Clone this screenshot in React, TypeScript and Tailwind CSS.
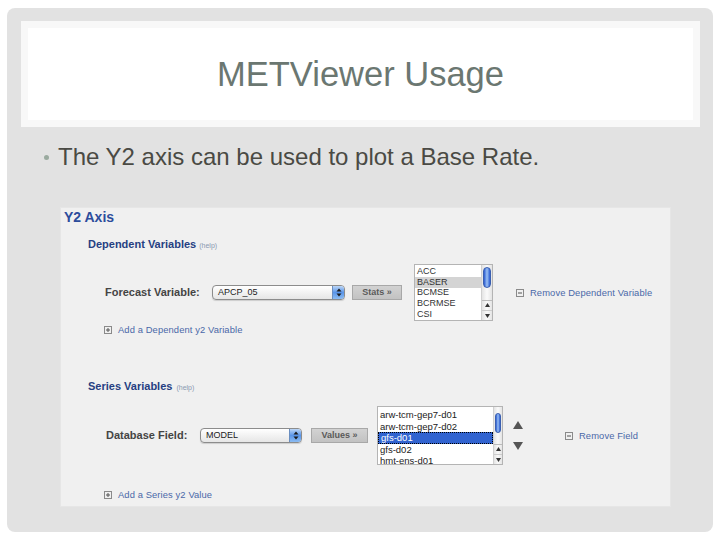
import React from "react";

const F = { fontFamily: '"Liberation Sans", Arial, sans-serif' };

function SelectBox({ w, text }: { w: string; text: string }) {
  return (
    <div className={`${w} h-[15px] flex items-stretch rounded-[4px] border border-[#8c8c8c] bg-gradient-to-b from-white to-[#e6e6e6] shadow-[0_1px_1px_rgba(0,0,0,0.15)] overflow-hidden`}>
      <div className="flex-1 flex items-center pl-[5px] text-[9px] text-[#222] leading-none">{text}</div>
      <div className="w-[12px] flex items-center justify-center bg-gradient-to-b from-[#bcd6f6] via-[#5a95e8] to-[#8cbcf2] border-l border-[#6a8ec0]">
        <svg width="6" height="9" viewBox="0 0 6 9">
          <path d="M3 0.5 L5.5 3.5 L0.5 3.5 Z" fill="#1a1a1a" />
          <path d="M3 8.5 L5.5 5.5 L0.5 5.5 Z" fill="#1a1a1a" />
        </svg>
      </div>
    </div>
  );
}

function Btn({ w, text }: { w: string; text: string }) {
  return (
    <div className={`${w} h-[15px] flex items-center justify-center bg-gradient-to-b from-[#d2d2d2] to-[#c2c2c2] border border-[#a8a8a8] text-[9px] font-bold text-[#5a5a5a] leading-none`}>
      {text}
    </div>
  );
}

function Scroll({ w, thumbTop, thumbH }: { w: string; thumbTop: string; thumbH: string }) {
  return (
    <div className={`${w} h-full flex flex-col items-center bg-gradient-to-r from-[#e4e4e4] via-[#fafafa] to-[#e4e4e4] border-l border-[#d0d0d0]`}>
      <div className={`${thumbTop} ${thumbH} w-[80%] rounded-full bg-gradient-to-r from-[#2d5ad0] via-[#9cc0f4] to-[#2d5ad0] border border-[#3a5fb0]`} />
      <div className="flex-1" />
      <div className="w-full flex flex-col items-center border-t border-[#bbb] pt-[2px] pb-[2px] gap-[3px]">
        <svg width="5" height="4" viewBox="0 0 5 4"><path d="M2.5 0 L5 4 L0 4 Z" fill="#333" /></svg>
        <div className="w-full border-t border-[#ccc]" />
        <svg width="5" height="4" viewBox="0 0 5 4"><path d="M0 0 L5 0 L2.5 4 Z" fill="#333" /></svg>
      </div>
    </div>
  );
}

function BoxIcon({ plus }: { plus?: boolean }) {
  return (
    <svg width="8" height="8" viewBox="0 0 8 8" className="shrink-0">
      <rect x="0.5" y="0.5" width="7" height="7" fill="none" stroke="#8a8a8a" strokeWidth="1" />
      <path d="M2 4 H6" stroke="#555" strokeWidth="1" />
      {plus ? <path d="M4 2 V6" stroke="#555" strokeWidth="1" /> : null}
    </svg>
  );
}

function LinkRow({ plus, text, cls }: { plus?: boolean; text: string; cls?: string }) {
  return (
    <div className={`flex items-center gap-[6px] ${cls ?? ""}`}>
      <BoxIcon plus={plus} />
      <span className="text-[9.4px] text-[#4a68a8] leading-none tracking-[0.1px]">{text}</span>
    </div>
  );
}

export default function App() {
  const list1 = ["ACC", "BASER", "BCMSE", "BCRMSE", "CSI"];
  const list2 = ["arw-tcm-gep7-d01", "arw-tcm-gep7-d02", "gfs-d01", "gfs-d02", "hmt-ens-d01"];
  return (
    <div className="w-[720px] h-[540px] bg-white pt-[8px] pl-[7px]" style={F}>
      <div className="w-[706px] h-[524px] rounded-[8px] bg-[#e2e2e2] flex flex-col">
        {/* title */}
        <div className="mt-[13px] ml-[14px] w-[679px] h-[106px] bg-[#f8f8f8] p-[7px]">
          <div className="w-full h-full bg-white flex items-center justify-center">
            <span className="text-[34.5px] text-[#6b7771] leading-none">METViewer Usage</span>
          </div>
        </div>
        {/* bullet */}
        <div className="mt-[15px] h-[30px] flex items-center">
          <div className="ml-[37px] w-[5px] h-[5px] rounded-full bg-[#9aaa9f]" />
          <span className="ml-[9px] text-[24px] text-[#4a4a44] leading-none">The Y2 axis can be used to plot a Base Rate.</span>
        </div>
        {/* screenshot panel */}
        <div className="mt-[35px] ml-[53px] w-[611px] h-[300px] bg-[#f0f0f0] border border-[#e6e6e6] flex flex-col">
          <div className="h-[18px] pl-[3px] flex items-center">
            <span className="text-[14px] font-bold text-[#2c4c9c] leading-none">Y2 Axis</span>
          </div>
          <div className="mt-[9px] h-[18px] pl-[27px] flex items-center gap-[3px]">
            <span className="text-[11px] font-bold text-[#263f82] leading-none">Dependent Variables</span>
            <span className="text-[7px] text-[#8a9ab0] leading-none mt-[2px]">(help)</span>
          </div>
          <div className="mt-[11px] h-[57px] flex items-center">
            <div className="ml-[44px] w-[107px] text-[11px] font-bold text-[#444] leading-none">Forecast Variable:</div>
            <SelectBox w="w-[133px]" text="APCP_05" />
            <div className="ml-[7px]"><Btn w="w-[50px]" text="Stats »" /></div>
            <div className="ml-[12px] w-[79px] h-[57px] bg-white border border-[#b4b4b4] flex">
              <div className="flex-1 pt-[1px] flex flex-col">
                {list1.map((t) => (
                  <div key={t} className={`h-[11.2px] pl-[2px] flex items-center text-[9px] leading-none text-[#333] ${t === "BASER" ? "bg-[#d4d4d4]" : ""}`}>{t}</div>
                ))}
              </div>
              <Scroll w="w-[11px]" thumbTop="mt-[2px]" thumbH="h-[21px]" />
            </div>
            <LinkRow cls="ml-[23px]" text="Remove Dependent Variable" />
          </div>
          <div className="h-[18px] flex items-center">
            <LinkRow plus cls="ml-[43px]" text="Add a Dependent y2 Variable" />
          </div>
          <div className="mt-[38px] h-[18px] pl-[27px] flex items-center gap-[4px]">
            <span className="text-[11px] font-bold text-[#263f82] leading-none">Series Variables</span>
            <span className="text-[7px] text-[#8a9ab0] leading-none mt-[2px]">(help)</span>
          </div>
          <div className="mt-[11px] h-[59px] flex items-center">
            <div className="ml-[45px] w-[94px] text-[11px] font-bold text-[#444] leading-none">Database Field:</div>
            <SelectBox w="w-[102px]" text="MODEL" />
            <div className="ml-[9px]"><Btn w="w-[57px]" text="Values »" /></div>
            <div className="ml-[9px] w-[126px] h-[59px] bg-white border border-[#b4b4b4] flex overflow-hidden">
              <div className="flex-1 flex flex-col overflow-hidden">
                <div className="mt-[2px] flex flex-col">
                  {list2.map((t) => (
                    <div key={t} className={`h-[11.5px] shrink-0 pl-[2px] flex items-center text-[9.5px] leading-none ${t === "gfs-d01" ? "bg-[#3163d0] text-white border border-dotted border-black" : "text-[#222]"}`}>{t}</div>
                  ))}
                </div>
              </div>
              <Scroll w="w-[9px]" thumbTop="mt-[6px]" thumbH="h-[20px]" />
            </div>
            <div className="ml-[10px] flex flex-col gap-[13px]">
              <svg width="10" height="8" viewBox="0 0 10 8"><path d="M5 0 L10 8 L0 8 Z" fill="#555" /></svg>
              <svg width="10" height="8" viewBox="0 0 10 8"><path d="M0 0 L10 0 L5 8 Z" fill="#555" /></svg>
            </div>
            <LinkRow cls="ml-[42px]" text="Remove Field" />
          </div>
          <div className="mt-[21px] h-[18px] flex items-center">
            <LinkRow plus cls="ml-[43px]" text="Add a Series y2 Value" />
          </div>
        </div>
      </div>
    </div>
  );
}
